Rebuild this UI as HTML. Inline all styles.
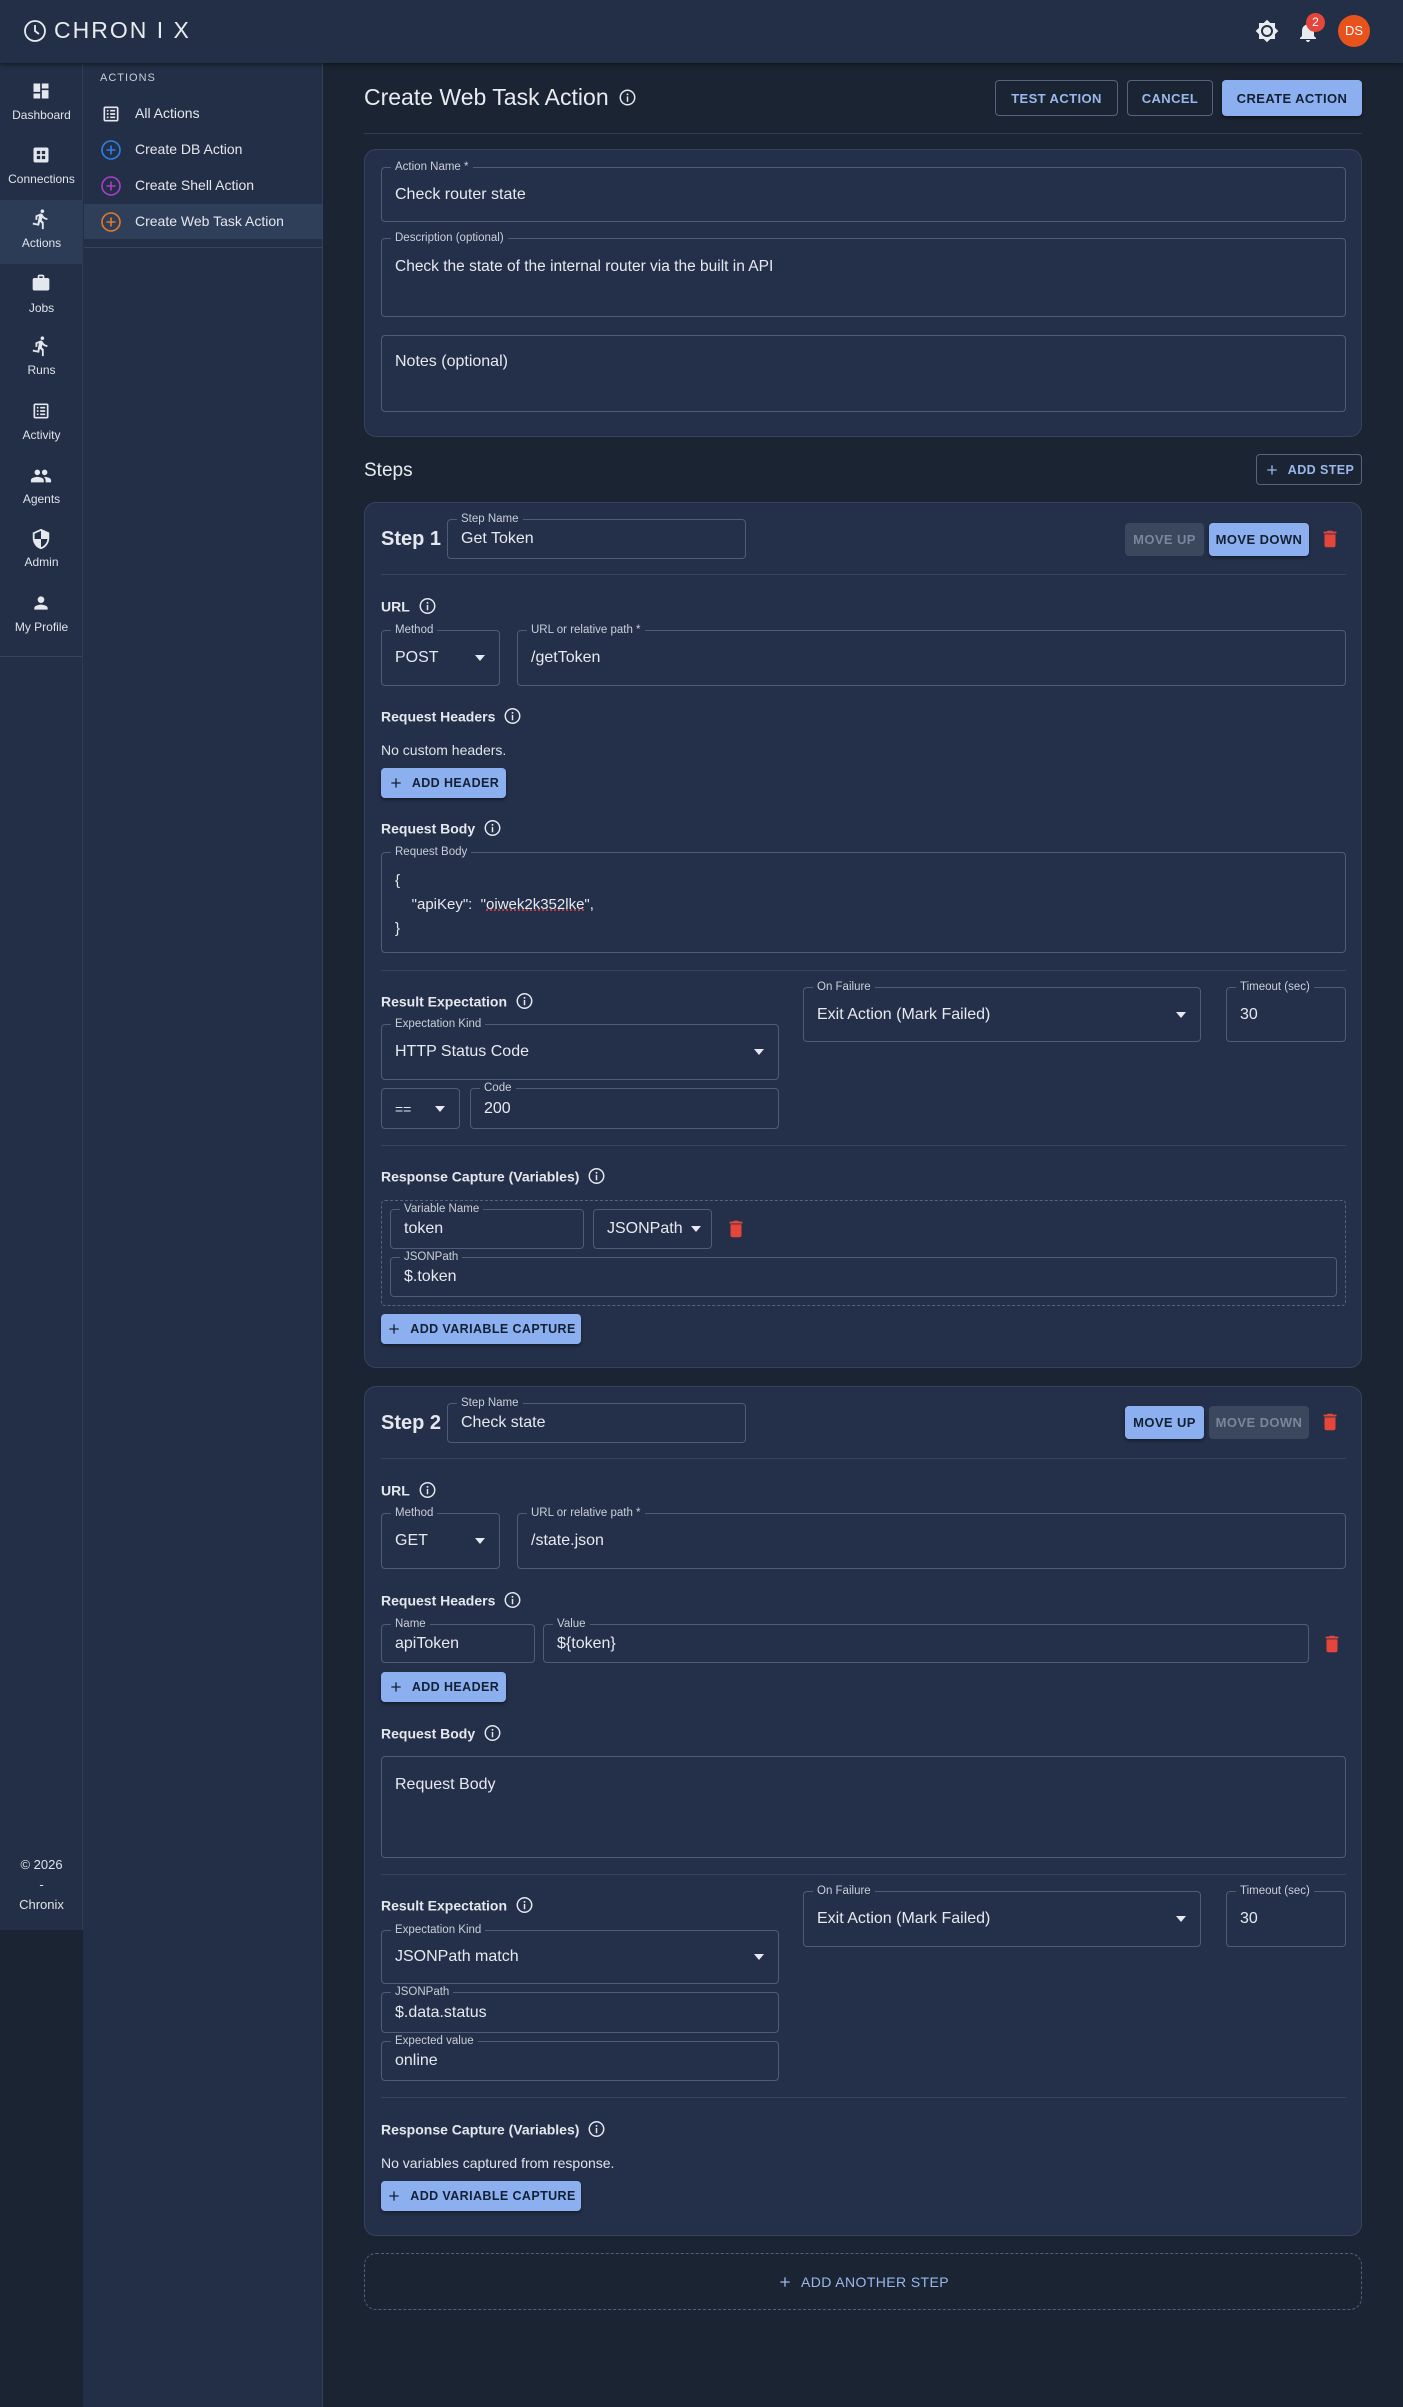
<!DOCTYPE html>
<html><head><meta charset="utf-8"><style>
*{box-sizing:border-box}
body{margin:0;width:1403px;height:2407px;background:#1b2432;font-family:"Liberation Sans",sans-serif;color:#e4e7ed;position:relative;overflow:hidden}
.a{position:absolute}
.top{left:0;top:0;width:1403px;height:63px;background:#232f46;box-shadow:0 2px 4px rgba(0,0,0,.4);z-index:2}
.rail{left:0;top:63px;width:83px;height:1867px;background:#232f46;border-right:1px solid #2f3b52}
.ri{position:absolute;left:0;width:83px;text-align:center;font-size:12px;color:#dfe3ea}
.panel{left:83px;top:63px;width:240px;height:2344px;background:#232f46;border-right:1px solid #34405a}
.pi{position:absolute;left:135px;font-size:14px;color:#e4e7ed}
.card{position:absolute;left:364px;width:998px;background:#243049;border:1px solid #36435c;border-radius:12px}
.f{position:absolute;border:1px solid #4f5c73;border-radius:4px}
.f .l{position:absolute;top:-8px;left:9px;padding:0 4px;font-size:11.5px;color:#c9cfd9;background:#243049;line-height:14px;white-space:nowrap}
.f .v{position:absolute;left:13px;top:50%;transform:translateY(-50%);font-size:16px;color:#e6e9ef;white-space:nowrap}
.car{position:absolute;right:14px;top:50%;margin-top:-3px;width:0;height:0;border-left:5px solid transparent;border-right:5px solid transparent;border-top:6px solid #e6e9ef}
.sec{position:absolute;left:381px;font-size:14px;font-weight:bold;color:#e4e7ed;display:flex;align-items:center;gap:9px;transform:translateY(-50%)}
.hr{position:absolute;left:381px;width:965px;height:1px;background:#36435c}
.btn{position:absolute;border-radius:4px;font-size:13px;font-weight:bold;letter-spacing:.4px;display:flex;align-items:center;justify-content:center;gap:8px}
.pri{background:#8cb0ef;color:#142033;box-shadow:0 2px 3px rgba(0,0,0,.4)}
.out{border:1px solid #55637c;color:#9bb8ec}
.dis{background:#3a475d;color:#7a8699}
.txt{position:absolute;font-size:14px;color:#dfe3ea;transform:translateY(-50%)}
</style></head><body>
<svg width="0" height="0" style="position:absolute"><defs>
<symbol id="info" viewBox="0 0 16 16"><circle cx="8" cy="8" r="6.8" fill="none" stroke="#e4e7ed" stroke-width="1.4"/><rect x="7.3" y="7" width="1.4" height="5" fill="#e4e7ed"/><circle cx="8" cy="5" r=".9" fill="#e4e7ed"/></symbol>
<symbol id="trash" viewBox="0 0 24 24"><path d="M6 19c0 1.1.9 2 2 2h8c1.1 0 2-.9 2-2V7H6v12zM19 4h-3.5l-1-1h-5l-1 1H5v2h14V4z" fill="#e5463c"/></symbol>
<symbol id="plus" viewBox="0 0 24 24"><path d="M19 13h-6v6h-2v-6H5v-2h6V5h2v6h6v2z"/></symbol>
</defs></svg>

<div class="a top">
 <svg class="a" style="left:23px;top:19px" width="24" height="24" viewBox="0 0 24 24"><circle cx="12" cy="12" r="10" fill="none" stroke="#e8ebf0" stroke-width="1.8"/><path d="M12 6v6l4 3" fill="none" stroke="#e8ebf0" stroke-width="1.8"/></svg>
 <div class="a" style="left:54px;top:17px;font-size:23px;letter-spacing:2px;color:#e8ebf0">CHRON I X</div>
 <svg class="a" style="left:1255px;top:19px" width="24" height="24" viewBox="0 0 24 24"><path d="M20 8.69V4h-4.69L12 .69 8.69 4H4v4.69L.69 12 4 15.31V20h4.69L12 23.31 15.31 20H20v-4.69L23.31 12 20 8.690zM12 18c-3.310 0-6-2.69-6-6s2.69-6 6-6 6 2.69 6 6-2.69 6-6 6zm0-10c-2.21 0-4 1.79-4 4s1.79 4 4 4 4-1.79 4-4-1.79-4-4-4z" fill="#e8ebf0"/></svg>
 <svg class="a" style="left:1296px;top:20px" width="24" height="24" viewBox="0 0 24 24"><path d="M12 22c1.1 0 2-.9 2-2h-4c0 1.1.89 2 2 2zm6-6v-5c0-3.07-1.64-5.64-4.5-6.32V4c0-.83-.67-1.5-1.5-1.5s-1.5.67-1.5 1.5v.68C7.63 5.36 6 7.92 6 11v5l-2 2v1h16v-1l-2-2z" fill="#e8ebf0"/></svg>
 <div class="a" style="left:1306px;top:13px;width:19px;height:19px;border-radius:50%;background:#e5463c;color:#fff;font-size:12px;text-align:center;line-height:19px">2</div>
 <div class="a" style="left:1338px;top:15px;width:32px;height:32px;border-radius:50%;background:#e8531d;color:#fff;font-size:13px;text-align:center;line-height:32px">DS</div>
</div>

<div class="a rail">
 <div class="a" style="left:0;top:137px;width:82px;height:64px;background:#2d3c56"></div>
</div>
<svg class="a" style="left:31px;top:81px" width="20" height="20" viewBox="0 0 24 24"><path d="M3 13h8V3H3v10zm0 8h8v-6H3v6zm10 0h8V11h-8v10zm0-18v6h8V3h-8z" fill="#e4e7ed"/></svg>
<div class="ri" style="top:108px">Dashboard</div>
<svg class="a" style="left:31px;top:145px" width="20" height="20" viewBox="0 0 24 24"><path d="M19 3H5c-1.1 0-2 .9-2 2v14c0 1.1.9 2 2 2h14c1.1 0 2-.9 2-2V5c0-1.1-.9-2-2-2zM11 17H7v-4h4v4zm0-6H7V7h4v4zm6 6h-4v-4h4v4zm0-6h-4V7h4v4z" fill="#e4e7ed"/></svg>
<div class="ri" style="top:172px">Connections</div>
<svg class="a" style="left:30px;top:208px" width="22" height="22" viewBox="0 0 24 24"><path d="M13.49 5.48c1.1 0 2-.9 2-2s-.9-2-2-2-2 .9-2 2 .9 2 2 2zm-3.6 13.9 1-4.4 2.1 2v6h2v-7.5l-2.1-2 .6-3c1.3 1.5 3.3 2.5 5.5 2.5v-2c-1.9 0-3.5-1-4.3-2.4l-1-1.6c-.4-.6-1-1-1.7-1-.3 0-.5.1-.8.1l-5.2 2.2v4.7h2v-3.4l1.8-.7-1.6 8.1-4.9-1-.4 2 7 1.4z" fill="#e4e7ed"/></svg>
<div class="ri" style="top:236px">Actions</div>
<svg class="a" style="left:31px;top:273px" width="20" height="20" viewBox="0 0 24 24"><path d="M20 6h-4V4c0-1.1-.9-2-2-2h-4c-1.1 0-2 .9-2 2v2H4c-1.1 0-2 .9-2 2v11c0 1.1.9 2 2 2h16c1.1 0 2-.9 2-2V8c0-1.1-.9-2-2-2zm-6 0h-4V4h4v2z" fill="#e4e7ed"/></svg>
<div class="ri" style="top:301px">Jobs</div>
<svg class="a" style="left:30px;top:335px" width="22" height="22" viewBox="0 0 24 24"><path d="M13.49 5.48c1.1 0 2-.9 2-2s-.9-2-2-2-2 .9-2 2 .9 2 2 2zm-3.6 13.9 1-4.4 2.1 2v6h2v-7.5l-2.1-2 .6-3c1.3 1.5 3.3 2.5 5.5 2.5v-2c-1.9 0-3.5-1-4.3-2.4l-1-1.6c-.4-.6-1-1-1.7-1-.3 0-.5.1-.8.1l-5.2 2.2v4.7h2v-3.4l1.8-.7-1.6 8.1-4.9-1-.4 2 7 1.4z" fill="#e4e7ed"/></svg>
<div class="ri" style="top:363px">Runs</div>
<svg class="a" style="left:31px;top:401px" width="20" height="20" viewBox="0 0 24 24"><path d="M19 3H5c-1.1 0-2 .9-2 2v14c0 1.1.9 2 2 2h14c1.1 0 2-.9 2-2V5c0-1.1-.9-2-2-2zm0 16H5V5h14v14zM7 7h2v2H7zm4 0h6v2h-6zm-4 4h2v2H7zm4 0h6v2h-6zm-4 4h2v2H7zm4 0h6v2h-6z" fill="#e4e7ed"/></svg>
<div class="ri" style="top:428px">Activity</div>
<svg class="a" style="left:30px;top:465px" width="22" height="22" viewBox="0 0 24 24"><path d="M16 11c1.66 0 2.99-1.34 2.99-3S17.66 5 16 5c-1.66 0-3 1.34-3 3s1.34 3 3 3zm-8 0c1.66 0 2.99-1.34 2.99-3S9.66 5 8 5C6.34 5 5 6.34 5 8s1.34 3 3 3zm0 2c-2.33 0-7 1.17-7 3.5V19h14v-2.5c0-2.33-4.67-3.5-7-3.5zm8 0c-.29 0-.62.02-.97.05 1.16.84 1.970 1.97 1.97 3.45V19h6v-2.5c0-2.33-4.67-3.5-7-3.5z" fill="#e4e7ed"/></svg>
<div class="ri" style="top:492px">Agents</div>
<svg class="a" style="left:30px;top:528px" width="22" height="22" viewBox="0 0 24 24"><path d="M12 1 3 5v6c0 5.55 3.84 10.74 9 12 5.16-1.26 9-6.45 9-12V5l-9-4zm0 10.99h7c-.53 4.12-3.28 7.79-7 8.94V12H5V6.3l7-3.11v8.8z" fill="#e4e7ed"/></svg>
<div class="ri" style="top:555px">Admin</div>
<svg class="a" style="left:31px;top:593px" width="20" height="20" viewBox="0 0 24 24"><path d="M12 12c2.21 0 4-1.79 4-4s-1.79-4-4-4-4 1.79-4 4 1.79 4 4 4zm0 2c-2.67 0-8 1.34-8 4v2h16v-2c0-2.66-5.33-4-8-4z" fill="#e4e7ed"/></svg>
<div class="ri" style="top:620px">My Profile</div>
<div class="a" style="left:0;top:656px;width:82px;height:1px;background:#36435c"></div>
<div class="ri" style="top:1857px;font-size:13px">© 2026</div>
<div class="ri" style="top:1877px;font-size:13px">-</div>
<div class="ri" style="top:1897px;font-size:13px">Chronix</div>

<div class="a panel"></div>
<div class="a" style="left:100px;top:72px;font-size:11px;letter-spacing:1px;color:#c9cfd9">ACTIONS</div>
<div class="a" style="left:84px;top:204px;width:238px;height:35px;background:#2f3e59"></div>
<svg class="a" style="left:101px;top:104px" width="20" height="20" viewBox="0 0 24 24"><path d="M19 3H5c-1.1 0-2 .9-2 2v14c0 1.1.9 2 2 2h14c1.1 0 2-.9 2-2V5c0-1.1-.9-2-2-2zm0 16H5V5h14v14zM7 7h2v2H7zm4 0h6v2h-6zm-4 4h2v2H7zm4 0h6v2h-6zm-4 4h2v2H7zm4 0h6v2h-6z" fill="#e4e7ed"/></svg>
<div class="pi" style="top:105px">All Actions</div>
<svg class="a" style="left:100px;top:139px" width="22" height="22" viewBox="0 0 22 22"><circle cx="11" cy="11" r="9" fill="none" stroke="#2f7fe0" stroke-width="1.6"/><path d="M11 6.5v9M6.5 11h9" stroke="#2f7fe0" stroke-width="1.6"/></svg>
<div class="pi" style="top:141px">Create DB Action</div>
<svg class="a" style="left:100px;top:175px" width="22" height="22" viewBox="0 0 22 22"><circle cx="11" cy="11" r="9" fill="none" stroke="#a640c8" stroke-width="1.6"/><path d="M11 6.5v9M6.5 11h9" stroke="#a640c8" stroke-width="1.6"/></svg>
<div class="pi" style="top:177px">Create Shell Action</div>
<svg class="a" style="left:100px;top:211px" width="22" height="22" viewBox="0 0 22 22"><circle cx="11" cy="11" r="9" fill="none" stroke="#e07a2a" stroke-width="1.6"/><path d="M11 6.5v9M6.5 11h9" stroke="#e07a2a" stroke-width="1.6"/></svg>
<div class="pi" style="top:213px">Create Web Task Action</div>
<div class="a" style="left:84px;top:247px;width:238px;height:1px;background:#36435c"></div>

<!-- header -->
<div class="a" style="left:364px;top:84px;font-size:23px;color:#e8ebf0;display:flex;align-items:center;gap:10px">Create Web Task Action <svg width="17" height="17"><use href="#info"/></svg></div>
<div class="btn out" style="left:995px;top:80px;width:123px;height:36px">TEST ACTION</div>
<div class="btn out" style="left:1127px;top:80px;width:86px;height:36px">CANCEL</div>
<div class="btn pri" style="left:1222px;top:80px;width:140px;height:36px">CREATE ACTION</div>
<div class="a" style="left:364px;top:133px;width:998px;height:1px;background:#2c3d57"></div>

<div class="card" style="top:149px;height:288px"></div>
<div class="f" style="left:381px;top:167px;width:965px;height:55px"><span class="l">Action Name *</span><span class="v">Check router state</span></div>
<div class="f" style="left:381px;top:238px;width:965px;height:79px"><span class="l">Description (optional)</span><span class="v" style="top:19px;transform:none;font-size:15.5px">Check the state of the internal router via the built in API</span></div>
<div class="f" style="left:381px;top:335px;width:965px;height:77px"><span class="v" style="top:17px;transform:none">Notes (optional)</span></div>

<div class="a" style="left:364px;top:460px;font-size:19px;color:#e8ebf0">Steps</div>
<div class="btn out" style="left:1256px;top:454px;width:106px;height:31px;font-size:12.5px"><svg width="16" height="16" fill="#9bb8ec"><use href="#plus"/></svg>ADD STEP</div>

<!-- STEP 1 -->
<div class="card" style="top:502px;height:866px"></div>
<div class="a" style="left:381px;top:528px;font-size:20px;font-weight:bold">Step 1</div>
<div class="f" style="left:447px;top:519px;width:299px;height:40px"><span class="l">Step Name</span><span class="v">Get Token</span></div>
<div class="btn dis" style="left:1125px;top:523px;width:79px;height:33px">MOVE UP</div>
<div class="btn pri" style="left:1209px;top:523px;width:100px;height:33px">MOVE DOWN</div>
<svg class="a" style="left:1319px;top:527px" width="22" height="24"><use href="#trash"/></svg>
<div class="hr" style="top:574px"></div>
<div class="sec" style="top:606px">URL <svg width="17" height="17"><use href="#info"/></svg></div>
<div class="f" style="left:381px;top:630px;width:119px;height:56px"><span class="l">Method</span><span class="v">POST</span><span class="car"></span></div>
<div class="f" style="left:517px;top:630px;width:829px;height:56px"><span class="l">URL or relative path *</span><span class="v">/getToken</span></div>
<div class="sec" style="top:716px">Request Headers <svg width="17" height="17"><use href="#info"/></svg></div>
<div class="txt" style="left:381px;top:750px">No custom headers.</div>
<div class="btn pri" style="left:381px;top:768px;width:125px;height:30px;font-size:12.5px"><svg width="16" height="16" fill="#142033"><use href="#plus"/></svg>ADD HEADER</div>
<div class="sec" style="top:828px">Request Body <svg width="17" height="17"><use href="#info"/></svg></div>
<div class="f" style="left:381px;top:852px;width:965px;height:101px"><span class="l">Request Body</span>
 <div class="a" style="left:13px;top:16px;font-size:15px;line-height:24px;color:#e6e9ef">{<br>&nbsp;&nbsp;&nbsp;&nbsp;"apiKey":&nbsp; "<span style="text-decoration:underline dotted #e5463c">oiwek2k352lke</span>",<br>}</div></div>
<div class="hr" style="top:970px"></div>
<div class="sec" style="top:1001px">Result Expectation <svg width="17" height="17"><use href="#info"/></svg></div>
<div class="f" style="left:381px;top:1024px;width:398px;height:56px"><span class="l">Expectation Kind</span><span class="v">HTTP Status Code</span><span class="car"></span></div>
<div class="f" style="left:381px;top:1088px;width:79px;height:41px"><span class="v" style="font-size:14px">==</span><span class="car"></span></div>
<div class="f" style="left:470px;top:1088px;width:309px;height:41px"><span class="l">Code</span><span class="v">200</span></div>
<div class="f" style="left:803px;top:987px;width:398px;height:55px"><span class="l">On Failure</span><span class="v">Exit Action (Mark Failed)</span><span class="car"></span></div>
<div class="f" style="left:1226px;top:987px;width:120px;height:55px"><span class="l">Timeout (sec)</span><span class="v">30</span></div>
<div class="hr" style="top:1145px"></div>
<div class="sec" style="top:1176px">Response Capture (Variables) <svg width="17" height="17"><use href="#info"/></svg></div>
<div class="a" style="left:381px;top:1200px;width:965px;height:106px;border:1px dashed #56637a;border-radius:4px"></div>
<div class="f" style="left:390px;top:1209px;width:194px;height:40px"><span class="l">Variable Name</span><span class="v">token</span></div>
<div class="f" style="left:593px;top:1209px;width:119px;height:40px"><span class="v">JSONPath</span><span class="car" style="right:10px"></span></div>
<svg class="a" style="left:725px;top:1217px" width="22" height="24"><use href="#trash"/></svg>
<div class="f" style="left:390px;top:1257px;width:947px;height:40px"><span class="l">JSONPath</span><span class="v">$.token</span></div>
<div class="btn pri" style="left:381px;top:1314px;width:200px;height:30px;font-size:12.5px"><svg width="16" height="16" fill="#142033"><use href="#plus"/></svg>ADD VARIABLE CAPTURE</div>

<!-- STEP 2 -->
<div class="card" style="top:1386px;height:850px"></div>
<div class="a" style="left:381px;top:1412px;font-size:20px;font-weight:bold">Step 2</div>
<div class="f" style="left:447px;top:1403px;width:299px;height:40px"><span class="l">Step Name</span><span class="v">Check state</span></div>
<div class="btn pri" style="left:1125px;top:1406px;width:79px;height:33px">MOVE UP</div>
<div class="btn dis" style="left:1209px;top:1406px;width:100px;height:33px">MOVE DOWN</div>
<svg class="a" style="left:1319px;top:1410px" width="22" height="24"><use href="#trash"/></svg>
<div class="hr" style="top:1458px"></div>
<div class="sec" style="top:1490px">URL <svg width="17" height="17"><use href="#info"/></svg></div>
<div class="f" style="left:381px;top:1513px;width:119px;height:56px"><span class="l">Method</span><span class="v">GET</span><span class="car"></span></div>
<div class="f" style="left:517px;top:1513px;width:829px;height:56px"><span class="l">URL or relative path *</span><span class="v">/state.json</span></div>
<div class="sec" style="top:1600px">Request Headers <svg width="17" height="17"><use href="#info"/></svg></div>
<div class="f" style="left:381px;top:1624px;width:154px;height:39px"><span class="l">Name</span><span class="v">apiToken</span></div>
<div class="f" style="left:543px;top:1624px;width:766px;height:39px"><span class="l">Value</span><span class="v">${token}</span></div>
<svg class="a" style="left:1321px;top:1632px" width="22" height="24"><use href="#trash"/></svg>
<div class="btn pri" style="left:381px;top:1672px;width:125px;height:30px;font-size:12.5px"><svg width="16" height="16" fill="#142033"><use href="#plus"/></svg>ADD HEADER</div>
<div class="sec" style="top:1733px">Request Body <svg width="17" height="17"><use href="#info"/></svg></div>
<div class="f" style="left:381px;top:1756px;width:965px;height:102px"><span class="v" style="top:19px;transform:none">Request Body</span></div>
<div class="hr" style="top:1874px"></div>
<div class="sec" style="top:1905px">Result Expectation <svg width="17" height="17"><use href="#info"/></svg></div>
<div class="f" style="left:381px;top:1930px;width:398px;height:54px"><span class="l">Expectation Kind</span><span class="v">JSONPath match</span><span class="car"></span></div>
<div class="f" style="left:381px;top:1992px;width:398px;height:41px"><span class="l">JSONPath</span><span class="v">$.data.status</span></div>
<div class="f" style="left:381px;top:2041px;width:398px;height:40px"><span class="l">Expected value</span><span class="v">online</span></div>
<div class="f" style="left:803px;top:1891px;width:398px;height:56px"><span class="l">On Failure</span><span class="v">Exit Action (Mark Failed)</span><span class="car"></span></div>
<div class="f" style="left:1226px;top:1891px;width:120px;height:56px"><span class="l">Timeout (sec)</span><span class="v">30</span></div>
<div class="hr" style="top:2097px"></div>
<div class="sec" style="top:2129px">Response Capture (Variables) <svg width="17" height="17"><use href="#info"/></svg></div>
<div class="txt" style="left:381px;top:2163px">No variables captured from response.</div>
<div class="btn pri" style="left:381px;top:2181px;width:200px;height:30px;font-size:12.5px"><svg width="16" height="16" fill="#142033"><use href="#plus"/></svg>ADD VARIABLE CAPTURE</div>

<div class="btn" style="left:364px;top:2253px;width:998px;height:57px;border:1px dashed #4f5f7c;border-radius:12px;color:#9bb8ec;font-weight:normal;font-size:14px"><svg width="16" height="16" fill="#9bb8ec"><use href="#plus"/></svg>ADD ANOTHER STEP</div>
</body></html>
